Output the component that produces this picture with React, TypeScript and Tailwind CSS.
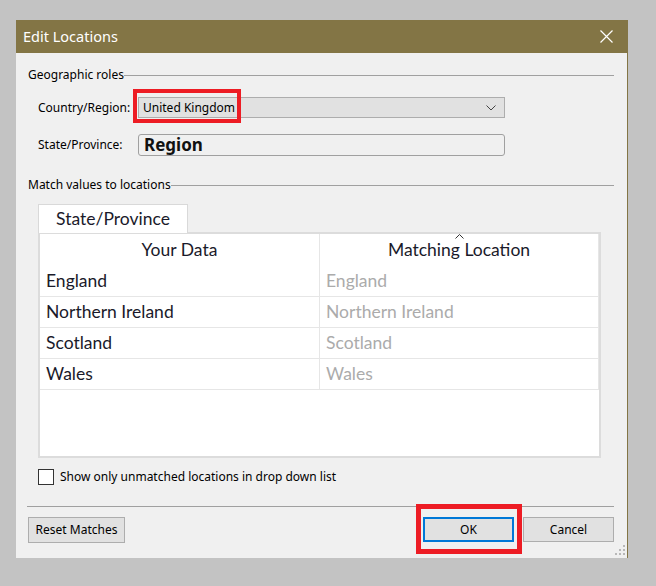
import React from "react";

const ui = { fontFamily: '"Noto Sans", "Open Sans", sans-serif' };
const tab = { fontFamily: 'Lato, "Open Sans", sans-serif' };

const rows = ["England", "Northern Ireland", "Scotland", "Wales"];

export default function App() {
  return (
    <div className="w-[656px] h-[586px] bg-[#c3c3c3] pt-[20px] pl-[16px] overflow-hidden" style={ui}>
      <div className="relative w-[612px] h-[538px] bg-[#f0f0f0] border-r border-[#837545] flex flex-col">
        {/* Title bar */}
        <div className="h-[33px] bg-[#837545] flex items-center justify-between pl-[7px] pr-[14px] shrink-0">
          <span className="text-white text-[14.5px] leading-none" style={{ fontFamily: '"Noto Sans", sans-serif' }}>Edit Locations</span>
          <svg width="13" height="13" viewBox="0 0 13 13" className="block">
            <path d="M0.5 0.5 L12.5 12.5 M12.5 0.5 L0.5 12.5" stroke="#ffffff" strokeWidth="1.2" fill="none" />
          </svg>
        </div>

        {/* Body */}
        <div className="flex flex-col pl-[12px] pr-[13px] text-[12px] text-[#000]">
          {/* Geographic roles */}
          <div className="mt-[14px] h-[16px] flex items-center">
            <span className="leading-[16px] whitespace-nowrap">Geographic roles</span>
            <div className="flex-1 h-px bg-[#a0a0a0] mt-[1px]" />
          </div>

          {/* Country/Region */}
          <div className="mt-[14px] h-[21px] flex items-center pl-[10px]">
            <span className="w-[100px] whitespace-nowrap">Country/Region:</span>
            <div className="relative w-[367px] h-[21px] bg-[#e1e1e1] border border-[#adadad] flex items-center pl-[4px] pr-[8px] justify-between">
              <span className="whitespace-nowrap">United Kingdom</span>
              <svg width="10" height="6" viewBox="0 0 10 6">
                <path d="M0.5 0.5 L5 5 L9.5 0.5" stroke="#444" strokeWidth="1" fill="none" />
              </svg>
              <div className="absolute left-[-6px] top-[-9px] w-[108px] h-[34px] border-[4px] border-[#ed1c24]" />
            </div>
          </div>

          {/* State/Province */}
          <div className="mt-[16px] h-[21px] flex items-center pl-[10px]">
            <span className="w-[100px] whitespace-nowrap">State/Province:</span>
            <div className="w-[367px] h-[22px] border border-[#a0a0a0] rounded-[3px] flex items-center pl-[5px]">
              <span className="text-[17px] font-bold leading-none text-[#111]" style={{ fontFamily: '"Noto Sans", sans-serif' }}>Region</span>
            </div>
          </div>

          {/* Match values */}
          <div className="mt-[22px] h-[16px] flex items-center">
            <span className="leading-[16px] whitespace-nowrap">Match values to locations</span>
            <div className="flex-1 h-px bg-[#a0a0a0] mt-[1px]" />
          </div>

          {/* Tab */}
          <div className="mt-[11px] pl-[10px]" style={tab}>
            <div className="w-[150px] h-[29px] bg-white border border-b-0 border-[#d9d9d9] flex items-center justify-center text-[17.5px] text-[#1a1a2a] relative z-10">
              State/Province
            </div>
            <div className="w-[563px] h-[226px] mt-[-1px] bg-white border-2 border-[#dcdcdc] flex flex-col">
              <div className="h-[32px] flex shrink-0">
                <div className="w-[280px] border-r border-[#e6e6e6] flex items-center justify-center text-[17.5px] text-[#1a1a2a]">Your Data</div>
                <div className="w-[279px] border-r border-[#e6e6e6] flex items-center justify-center text-[17.5px] text-[#1a1a2a] relative">
                  Matching Location
                  <svg width="9" height="5" viewBox="0 0 9 5" className="absolute left-[135px] top-[0px]">
                    <path d="M0.5 4.5 L4.5 0.5 L8.5 4.5" stroke="#333" strokeWidth="1" fill="none" />
                  </svg>
                </div>
              </div>
              {rows.map((r) => (
                <div key={r} className="h-[31px] flex shrink-0 border-b border-[#e6e6e6] w-[559px]">
                  <div className="w-[280px] border-r border-[#e6e6e6] flex items-center pl-[6px] text-[17.5px] text-[#1a1a2a]">{r}</div>
                  <div className="w-[279px] border-r border-[#e6e6e6] flex items-center pl-[6px] text-[17.5px] text-[#ababab]">{r}</div>
                </div>
              ))}
            </div>
          </div>

          {/* Checkbox */}
          <div className="mt-[11px] h-[16px] flex items-center pl-[10px]">
            <div className="w-[16px] h-[16px] border border-[#333] bg-white" />
            <span className="ml-[6px] whitespace-nowrap">Show only unmatched locations in drop down list</span>
          </div>

          {/* Separator */}
          <div className="mt-[21px] h-px bg-[#a0a0a0] ml-[-1px]" />

          {/* Buttons */}
          <div className="mt-[10px] flex items-start">
            <button className="w-[97px] h-[26px] bg-[#e1e1e1] border border-[#adadad] text-[12px]">Reset Matches</button>
            <div className="flex-1" />
            <div className="relative">
              <button className="w-[91px] h-[25px] bg-[#e1e1e1] border-2 border-[#0078d7] text-[12px]">OK</button>
              <div className="absolute left-[-7px] top-[-13px] w-[106px] h-[50px] border-[5px] border-[#ed1c24]" />
            </div>
            <button className="ml-[9px] w-[91px] h-[25px] bg-[#e1e1e1] border border-[#adadad] text-[12px]">Cancel</button>
          </div>
        </div>

        {/* Resize grip */}
        <svg width="12" height="12" viewBox="0 0 12 12" className="absolute right-[1px] bottom-[2px]">
          {[
            [8, 0], [8, 4], [4, 4], [8, 8], [4, 8], [0, 8],
          ].map(([x, y], i) => (
            <rect key={i} x={x + 1} y={y + 1} width="2" height="2" fill="#b8b8b8" />
          ))}
        </svg>
      </div>
    </div>
  );
}
